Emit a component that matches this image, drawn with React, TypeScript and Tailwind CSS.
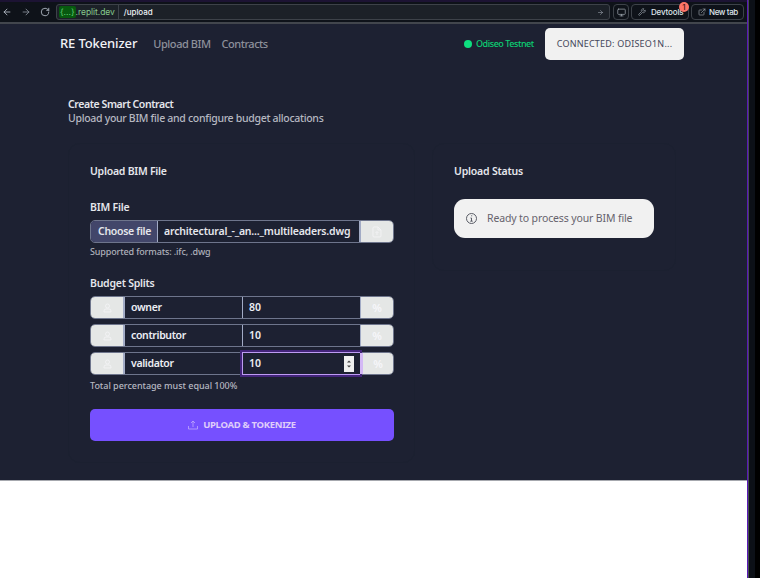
import React from "react";
import { ArrowLeft, ArrowRight, RotateCw, Monitor, Wrench, ExternalLink } from "lucide-react";

function UserIcon() {
  return (
    <svg width="9" height="10" viewBox="0 0 9 10" fill="none" stroke="#f3f3f5" strokeWidth="0.9">
      <circle cx="4.5" cy="3" r="2" />
      <path d="M1 9V8q0-2 2-2h3q2 0 2 2v1Z" />
    </svg>
  );
}

function FileUpIcon() {
  return (
    <svg width="10" height="12" viewBox="0 0 10 12" fill="none" stroke="#f3f3f5" strokeWidth="0.9">
      <path d="M2 1h4l3 3v6q0 1-1 1H2q-1 0-1-1V2q0-1 1-1Z M6 1v3h3 M5 9V5.5 M3.5 7 5 5.5 6.5 7" />
    </svg>
  );
}

function SplitRow({ name, value, focused = false }: { name: string; value: string; focused?: boolean }) {
  return (
    <div className="flex h-[23px] w-[304px] rounded-[5px] border border-[#6e758c] text-[10.5px] leading-[21px] font-semibold text-[#eceef4]">
      <div className="flex w-[34px] shrink-0 items-center justify-center rounded-l-[4px] border-r-2 border-[#a2abc5] bg-[#e5e7e6]">
        <UserIcon />
      </div>
      <div className="w-[117px] shrink-0 pl-[6px] tracking-[-0.35px]">{name}</div>
      <div
        className={
          focused
            ? "relative z-10 -my-px flex h-[23px] w-[118px] shrink-0 items-center justify-between border border-r-0 border-[#bd9bf2] pr-[6px] pl-[6px] shadow-[0_0_0_2px_#43247a]"
            : "w-[118px] shrink-0 border-l border-[#a2abc5] pl-[6px]"
        }
      >
        <span>{value}</span>
        {focused && (
          <span className="flex h-4 w-[10px] items-center justify-center bg-[#f0f0f0]">
            <svg width="6" height="10" viewBox="0 0 6 10" fill="#444">
              <path d="M1 3.5 3 1.5l2 2Z M1 6.5l2 2 2-2Z" />
            </svg>
          </span>
        )}
      </div>
      <div
        className={
          "relative flex flex-1 items-center justify-center rounded-r-[4px] bg-[#e5e7e6] text-[11px] text-[#f6f6fa] " +
          (focused ? "z-20 border-l-[3px] border-[#d3b8f5]" : "border-l border-[#a2abc5]")
        }
      >
        %
      </div>
    </div>
  );
}

export default function App() {
  return (
    <div className="flex h-[578px] w-[760px] overflow-hidden bg-black font-['Noto_Sans',sans-serif]">
      <div className="flex w-[747px] shrink-0 flex-col bg-white">
        <div className="flex h-[24px] shrink-0 items-center border-t-2 border-b-2 border-t-[#1c1333] border-b-[#42464d] bg-[#0e1219] font-['Inter',sans-serif] text-[#b9c2cd]">
          <ArrowLeft size={10} strokeWidth={2} className="ml-[2px]" />
          <ArrowRight size={10} strokeWidth={2} className="ml-[9px] text-[#8a929c]" />
          <RotateCw size={10} strokeWidth={2} className="ml-[9px]" />
          <div className="ml-[6px] flex h-[16px] w-[554px] items-center rounded-[3px] border border-[#3d4249] bg-[#1c2128] text-[8.5px]">
            <span className="ml-[2px] rounded-[2px] bg-[#07590f] px-px leading-[12px] text-[#62d076]">{"{...}"}</span>
            <span className="tracking-[-0.05px] text-[#86c98c]">.replit.dev</span>
            <span className="ml-[3px] h-full border-l border-[#3d4249] pl-[5px] text-[8px] leading-[15px] font-medium tracking-[-0.05px] text-[#edf1f5]">/upload</span>
            <ArrowRight size={7} className="mr-[5px] ml-auto text-[#9aa1aa]" />
          </div>
          <div className="ml-[3px] flex h-[16px] w-[16px] items-center justify-center rounded-[4px] border border-[#3d4249]">
            <Monitor size={9} className="text-[#9aa1aa]" />
          </div>
          <div className="relative ml-[2px] flex h-[16px] w-[58px] items-center rounded-[4px] border border-[#3d4249] pl-[6px] text-[8px] font-medium text-[#dfe4ea]">
            <Wrench size={8} className="mr-[5px] shrink-0 text-[#9aa1aa]" />
            <span className="tracking-[-0.15px]">Devtools</span>
            <span className="absolute -top-[3px] -right-[1px] h-[10px] w-[10px] rounded-full bg-[#ff7468] text-center text-[8px] leading-[10px] text-[#471414]">1</span>
          </div>
          <div className="ml-[2px] flex h-[16px] w-[53px] items-center rounded-[4px] border border-[#3d4249] pl-[6px] text-[8px] font-medium whitespace-nowrap text-[#dfe4ea]">
            <ExternalLink size={8} className="mr-[3px] shrink-0 text-[#9aa1aa]" />
            <span className="tracking-[-0.4px]">New tab</span>
          </div>
        </div>

        <div className="h-[456px] shrink-0 bg-[#1d2132]">
          <header className="flex h-[40px] items-center pr-[63px] pl-[60px] whitespace-nowrap">
            <span className="text-[13px] font-medium tracking-[-0.12px] text-[#f2f3f7]">RE Tokenizer</span>
            <span className="ml-[16px] text-[11px] font-medium tracking-[-0.45px] text-[#8d909b]">Upload BIM</span>
            <span className="ml-[11px] text-[11px] font-medium tracking-[-0.5px] text-[#8d909b]">Contracts</span>
            <span className="ml-auto h-[8px] w-[8px] rounded-full bg-[#0ddf7f]" />
            <span className="ml-[4px] w-[69px] text-[9px] font-medium tracking-[-0.45px] text-[#0ccf73]">Odiseo Testnet</span>
            <button className="h-[32px] w-[139px] rounded-[5px] bg-[#f1f1f1] text-[9px] tracking-[0.2px] text-[#44465a]">
              CONNECTED: ODISEO1N...
            </button>
          </header>

          <main className="pt-[33px] pl-[68px] font-semibold text-[#e5e6ec]">
            <h1 className="text-[10.5px] leading-[14px] tracking-[-0.42px]">Create Smart Contract</h1>
            <p className="text-[10.5px] leading-[14px] font-medium tracking-[-0.3px] text-[#b6b8c1]">Upload your BIM file and configure budget allocations</p>
            <div className="mt-[18px] flex items-start gap-[17px]">
              <section className="h-[320px] w-[347px] rounded-[12px] border border-[#1b2030] bg-[#1d2132] pt-[19px] pl-[21px] text-[10.5px]">
                <h2 className="leading-[16px] tracking-[-0.24px]">Upload BIM File</h2>
                <div className="mt-[20px] leading-[16px] tracking-[-0.2px]">BIM File</div>
                <div className="mt-[5px] flex h-[23px] w-[304px] overflow-hidden rounded-[5px] border border-[#6e758c] leading-[21px] whitespace-nowrap">
                  <span className="w-[67px] border-r border-[#a2abc5] bg-[#42466a] pl-[7px] tracking-[-0.3px]">Choose file</span>
                  <span className="w-[201px] pl-[6px] tracking-[-0.18px]">architectural_-_an..._multileaders.dwg</span>
                  <span className="flex flex-1 items-center justify-center border-l-2 border-[#a2abc5] bg-[#e5e7e6]">
                    <FileUpIcon />
                  </span>
                </div>
                <p className="mt-[2px] text-[9px] leading-[14px] font-medium tracking-[-0.14px] text-[#aeb0ba]">Supported formats: .ifc, .dwg</p>
                <div className="mt-[16px] leading-[16px] tracking-[-0.25px]">Budget Splits</div>
                <div className="mt-[5px] flex flex-col gap-[5px]">
                  <SplitRow name="owner" value="80" />
                  <SplitRow name="contributor" value="10" />
                  <SplitRow name="validator" value="10" focused />
                </div>
                <p className="mt-[4px] text-[9px] leading-[14px] font-medium tracking-[-0.03px] text-[#b6b8c1]">Total percentage must equal 100%</p>
                <button className="mt-[16px] flex h-[32px] w-[304px] items-center justify-center gap-[5px] rounded-[5px] bg-[#7650ff] text-[9.5px] font-bold tracking-[-0.3px] text-[#dfcdfa]">
                  <svg width="10" height="10" viewBox="0 0 10 10" fill="none" stroke="#c0a8fb" strokeWidth="0.8">
                    <path d="M.5 6v3h9V6 M5 7V1 M3 3l2-2 2 2" />
                  </svg>
                  <span>UPLOAD &amp; TOKENIZE</span>
                </button>
              </section>
              <section className="h-[128px] w-[244px] rounded-[12px] border border-[#1b2030] pt-[19px] pl-[21px] text-[10.5px]">
                <h2 className="leading-[16px] tracking-[-0.2px]">Upload Status</h2>
                <div className="mt-[20px] flex h-[39px] w-[200px] items-center rounded-[11px] bg-[#f1f1f1] pl-[12px] font-normal whitespace-nowrap text-[#66636d]">
                  <svg width="11" height="11" viewBox="0 0 11 11" fill="none" stroke="#4a4d57" strokeWidth="0.9">
                    <circle cx="5.5" cy="5.5" r="5" />
                    <path d="M4.5 5h1v3M4.3 8.2h2.4M5.2 2.8h1" />
                  </svg>
                  <span className="ml-[10px] tracking-[-0.13px]">Ready to process your BIM file</span>
                </div>
              </section>
            </div>
          </main>
        </div>
        <div className="h-px bg-[#a6a8ae]" />
      </div>
      <div className="w-[8px] shrink-0 border-l border-[#5a19b8] bg-[#0c1017]">
        <div className="h-full w-px bg-[#464b51]" />
      </div>
    </div>
  );
}
